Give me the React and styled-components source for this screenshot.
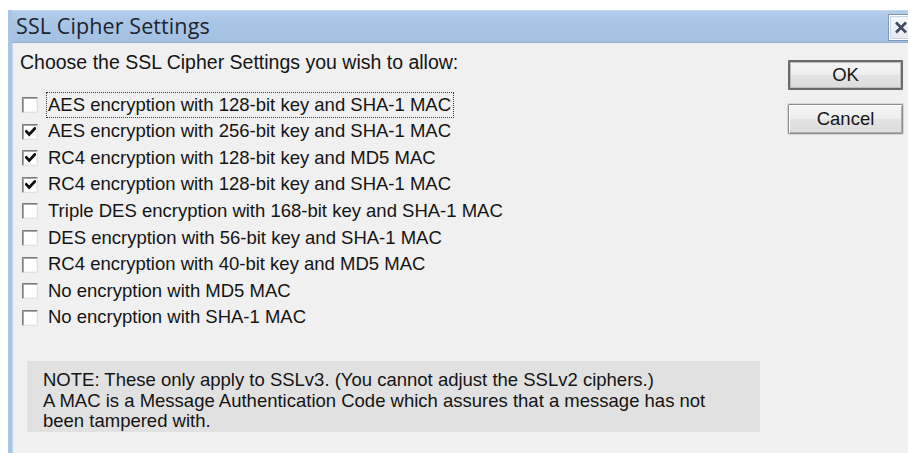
import React from "react";
import styled, { createGlobalStyle } from "styled-components";

const GlobalStyle = createGlobalStyle`
  html, body {
    margin: 0;
    padding: 0;
    background: #ffffff;
  }
  body {
    font-family: "Liberation Sans", Arial, sans-serif;
  }
`;

const Desktop = styled.div`
  width: 908px;
  height: 453px;
  overflow: hidden;
  padding: 10px 0 0 8px;
  box-sizing: border-box;
  background: #ffffff;
`;

const Window = styled.div`
  width: 910px;
  height: 460px;
  box-sizing: border-box;
  border-left: 4px solid #a9c5e5;
  box-shadow: inset 1px 0 0 #c3d7ee;
  background: #f0f0f0;
  display: flex;
  flex-direction: column;
`;

const TitleBar = styled.div`
  height: 33px;
  box-sizing: border-box;
  display: flex;
  align-items: center;
  justify-content: space-between;
  padding: 0 4px 0 4px;
  background: linear-gradient(#b4cdea 0%, #a9c5e5 40%, #a3c0e2 100%);
  border-top: 1px solid #c2d7ef;
  border-bottom: 1px solid #8fb0d6;
`;

const Title = styled.span`
  font-family: "Open Sans", "Noto Sans", sans-serif;
  font-size: 21.5px;
  color: #1c2430;
  letter-spacing: 0.1px;
  line-height: 1;
  padding-bottom: 2px;
`;

const CloseButton = styled.div`
  width: 26px;
  height: 27px;
  box-sizing: border-box;
  border: 1px solid #7f97b8;
  box-shadow: inset 0 0 0 1px #ffffff, inset 0 0 0 2px #c9d6e6;
  background: linear-gradient(#f6f8fb, #e4eaf2);
  display: flex;
  align-items: center;
  justify-content: center;
  margin-top: 2px;
`;

const Body = styled.div`
  flex: 1;
  display: flex;
  padding: 9px 15px 0 8px;
  font-size: 18.5px;
  color: #141414;
`;

const MainColumn = styled.div`
  flex: 1;
  display: flex;
  flex-direction: column;
`;

const Prompt = styled.div`
  font-size: 19.5px;
  line-height: 21px;
  height: 21px;
  white-space: nowrap;
`;

const CipherList = styled.div`
  display: flex;
  flex-direction: column;
  margin-top: 18.3px;
  padding-left: 2px;
`;

const Row = styled.label`
  height: 26.6px;
  display: flex;
  align-items: center;
  gap: 8px;
`;

const Box = styled.span`
  width: 16px;
  height: 16px;
  box-sizing: border-box;
  flex: none;
  border: 1px solid;
  border-color: #7c7c7c #e2e2e2 #e2e2e2 #7c7c7c;
  box-shadow: inset 1px 1px 0 #a9a9a9, inset -1px -1px 0 #f4f4f4;
  background: #ffffff;
  display: flex;
  align-items: center;
  justify-content: center;
  margin-top: 1px;
`;

const Label = styled.span`
  line-height: 21px;
  padding: 2px 3px 3px 2px;
  white-space: nowrap;
  outline: ${(p) => (p.$focused ? "1px dotted #3c3c3c" : "none")};
  outline-offset: -1px;
`;

const Note = styled.div`
  margin-top: 30.3px;
  margin-left: 7px;
  width: 733px;
  height: 71px;
  box-sizing: border-box;
  padding: 9px 16px 0;
  background: #e1e1e1;
  line-height: 20.7px;
  white-space: nowrap;
`;

const ButtonColumn = styled.div`
  width: 115px;
  display: flex;
  flex-direction: column;
  gap: 14px;
  padding-top: 8px;
`;

const Button = styled.div`
  height: 30px;
  box-sizing: border-box;
  display: flex;
  align-items: center;
  justify-content: center;
  font-size: 18.5px;
  color: #161616;
  background: linear-gradient(#f5f5f5 0%, #eeeeee 48%, #e3e3e3 52%, #dcdcdc 100%);
  border: ${(p) => (p.$default ? "2px solid #6a6a6a" : "1px solid #8c8c8c")};
  box-shadow: ${(p) =>
    p.$default
      ? "inset 0 0 0 1px #bdbdbd"
      : "inset 1px 1px 0 #ffffff, inset -1px -1px 0 #b0b0b0, 0 0 0 1px #d6d6d6"};
  border-radius: 1px;
`;

const ciphers = [
  { text: "AES encryption with 128-bit key and SHA-1 MAC", checked: false, focused: true },
  { text: "AES encryption with 256-bit key and SHA-1 MAC", checked: true },
  { text: "RC4 encryption with 128-bit key and MD5 MAC", checked: true },
  { text: "RC4 encryption with 128-bit key and SHA-1 MAC", checked: true },
  { text: "Triple DES encryption with 168-bit key and SHA-1 MAC", checked: false },
  { text: "DES encryption with 56-bit key and SHA-1 MAC", checked: false },
  { text: "RC4 encryption with 40-bit key and MD5 MAC", checked: false },
  { text: "No encryption with MD5 MAC", checked: false },
  { text: "No encryption with SHA-1 MAC", checked: false },
];

function CheckMark() {
  return (
    <svg width="11" height="10" viewBox="0 0 11 10">
      <path d="M1.3 4.4 L4.2 7.4 L9.8 1.5" fill="none" stroke="#0c0c0c" strokeWidth="2.8" strokeLinecap="square" />
    </svg>
  );
}

function CloseGlyph() {
  return (
    <svg width="14" height="13" viewBox="0 0 14 13">
      <path d="M2 1.5 L12 11.5 M12 1.5 L2 11.5" stroke="#3d4b60" strokeWidth="2.6" />
    </svg>
  );
}

export default function App() {
  return (
    <>
      <GlobalStyle />
      <Desktop>
        <Window>
          <TitleBar>
            <Title>SSL Cipher Settings</Title>
            <CloseButton>
              <CloseGlyph />
            </CloseButton>
          </TitleBar>
          <Body>
            <MainColumn>
              <Prompt>Choose the SSL Cipher Settings you wish to allow:</Prompt>
              <CipherList>
                {ciphers.map((c) => (
                  <Row key={c.text}>
                    <Box>{c.checked && <CheckMark />}</Box>
                    <Label $focused={c.focused}>{c.text}</Label>
                  </Row>
                ))}
              </CipherList>
              <Note>
                NOTE: These only apply to SSLv3. (You cannot adjust the SSLv2 ciphers.)
                <br />
                A MAC is a Message Authentication Code which assures that a message has not
                <br />
                been tampered with.
              </Note>
            </MainColumn>
            <ButtonColumn>
              <Button $default>OK</Button>
              <Button>Cancel</Button>
            </ButtonColumn>
          </Body>
        </Window>
      </Desktop>
    </>
  );
}
